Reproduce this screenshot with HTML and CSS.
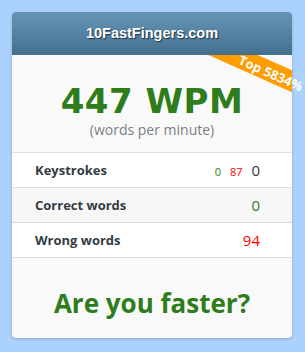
FILE: index.html
```html
<!DOCTYPE html>
<html lang="en">
<head>
    <meta charset="UTF-8">
    <title>10FastFingers.com</title>
    <link rel="stylesheet" href="styles.css">
</head>
<body>
    <div class="card">
        <div class="card-header">10FastFingers.com</div>

        <div class="ribbon-clip">
            <div class="ribbon-band"></div>
        </div>
        <div class="ribbon-text">Top 5834%</div>

        <div class="score">
            <div class="wpm">447 WPM</div>
            <div class="wpm-sub">(words per minute)</div>
        </div>

        <table class="stats">
            <tr>
                <td class="label">Keystrokes</td>
                <td class="value">
                    <span class="small green">0</span>
                    <span class="small red">87</span>
                    <span>0</span>
                </td>
            </tr>
            <tr class="alt">
                <td class="label">Correct words</td>
                <td class="value green">0</td>
            </tr>
            <tr>
                <td class="label">Wrong words</td>
                <td class="value red">94</td>
            </tr>
        </table>

        <div class="footer">Are you faster?</div>
    </div>
</body>
</html>
```

FILE: styles.css
```css
body {
    margin: 0;
    padding: 12px;
    background-color: #abd1fd;
    font-family: 'Open Sans', sans-serif;
    color: #333c45;
}
.card {
    position: relative;
    width: 280px;
    height: 326px;
    background: #f9f9f9;
    border-radius: 4px;
    box-shadow: 0 1px 3px rgba(0, 0, 0, 0.2);
}
.card-header {
    height: 43px;
    line-height: 43px;
    text-align: center;
    color: #fff;
    font-family: 'Liberation Sans', sans-serif;
    font-weight: bold;
    font-size: 14.5px;
    text-shadow: 1px 1px 1px #1e3344;
    background: linear-gradient(#6595b6, #44708f);
    border-radius: 4px 4px 0 0;
}
.ribbon-clip {
    position: absolute;
    left: 150px;
    top: 43px;
    width: 130px;
    height: 60px;
    overflow: hidden;
}
.ribbon-band {
    position: absolute;
    left: 28px;
    top: 2px;
    width: 140px;
    height: 20px;
    background: #ff9c00;
    transform: rotate(24deg);
}
.ribbon-text {
    position: absolute;
    left: 209px;
    top: 51px;
    width: 100px;
    height: 20px;
    line-height: 20px;
    text-align: center;
    color: #fff;
    font-weight: bold;
    font-size: 13px;
    transform: rotate(24deg);
}
.score {
    height: 97px;
    text-align: center;
}
.wpm {
    padding-top: 26px;
    font-family: 'DejaVu Sans', sans-serif;
    font-weight: bold;
    font-size: 34px;
    letter-spacing: 0.5px;
    line-height: 40px;
    color: #2e7c1a;
}
.wpm-sub {
    font-size: 14px;
    line-height: 18px;
    color: #7b7f84;
}
.stats {
    width: 100%;
    border-collapse: collapse;
    background: #fff;
}
.stats td {
    height: 34px;
    padding: 0;
    border-top: 1px solid #dedede;
    border-bottom: 1px solid #dedede;
}
.stats tr.alt td {
    background: #f7f7f7;
}
.stats .label {
    padding-left: 23px;
    font-weight: bold;
    font-size: 13px;
}
.stats .value {
    padding-right: 32px;
    text-align: right;
    font-size: 15px;
}
.small {
    font-size: 11px;
    margin-right: 5px;
}
.green {
    color: #2e7c1a;
}
.red {
    color: #f00;
}
.footer {
    padding-top: 27px;
    text-align: center;
    font-weight: bold;
    font-size: 26px;
    color: #2e7c1a;
}
```
